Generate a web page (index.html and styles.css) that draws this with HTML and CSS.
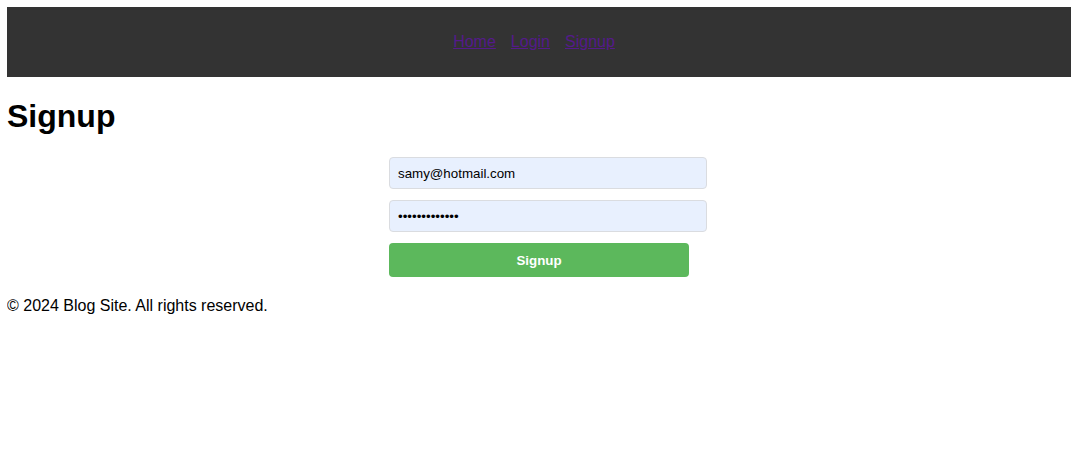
FILE: index.html
```html
<!DOCTYPE html>
<html>
<head>
<meta charset="utf-8">
<title>Signup</title>
<link rel="stylesheet" href="styles.css">
</head>
<body>
<header class="site-header">
  <nav class="nav">
    <a href="#" class="nav-link">Home</a>
    <a href="#" class="nav-link">Login</a>
    <a href="#" class="nav-link">Signup</a>
  </nav>
</header>
<main>
  <h1 class="title">Signup</h1>
  <form class="form">
    <input class="field" type="email" value="samy@hotmail.com">
    <input class="field" type="password" value="samypassword1">
    <button class="btn" type="button">Signup</button>
  </form>
</main>
<footer class="footer">
  <p class="footer-text">© 2024 Blog Site. All rights reserved.</p>
</footer>
</body>
</html>
```
FILE: styles.css
```css
body {
  margin: 7px 8px 8px 7px;
  font-family: "Liberation Sans", Arial, sans-serif;
  font-size: 16px;
  color: #000;
  background: #fff;
}
.site-header {
  background: #333;
  height: 70px;
  display: flex;
  align-items: center;
  justify-content: center;
}
.nav {
  display: flex;
  gap: 15px;
  padding-right: 10px;
}
.nav-link {
  color: #551a8b;
  font-size: 16px;
}
.title {
  font-size: 32px;
  font-weight: bold;
  margin: 21px 0 22px;
}
.form {
  width: 300px;
  margin: 0 auto;
  display: flex;
  flex-direction: column;
  align-items: flex-start;
}
.field {
  width: 300px;
  box-sizing: content-box;
  padding: 8px;
  margin: 0 0 11px;
  border: 1px solid #dadce0;
  border-radius: 4px;
  background: #e8f0fe;
  font-family: "Liberation Sans", Arial, sans-serif;
  font-size: 13.33px;
  height: 14px;
  color: #000;
}
.btn {
  width: 300px;
  height: 34px;
  border: none;
  border-radius: 4px;
  background: #5cb85c;
  color: #fff;
  font-family: "Liberation Sans", Arial, sans-serif;
  font-size: 13.33px;
  font-weight: bold;
}
.footer-text {
  margin: 20px 0 0;
}
```
